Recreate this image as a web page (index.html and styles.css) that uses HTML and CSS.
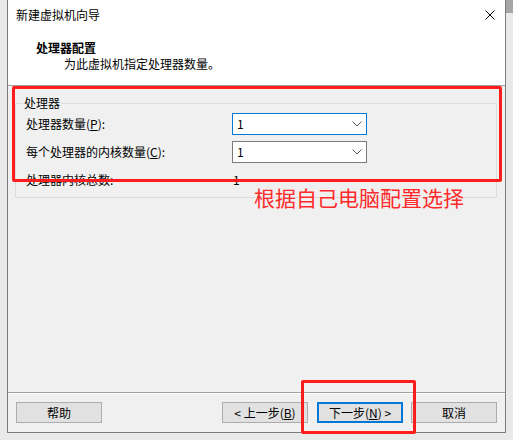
FILE: index.html
```html
<!DOCTYPE html>
<html lang="zh-CN">
<head>
<meta charset="utf-8">
<title>新建虚拟机向导</title>
<link rel="stylesheet" href="styles.css">
</head>
<body>
<div class="window">
  <div class="titlebar">
    <span class="title">新建虚拟机向导</span>
    <svg class="close" width="10" height="10" viewBox="0 0 10 10"><path d="M0.5 0.5L9.5 9.5M9.5 0.5L0.5 9.5" stroke="#000" stroke-width="1" fill="none"/></svg>
  </div>
  <div class="header">
    <div class="h-title">处理器配置</div>
    <div class="h-sub">为此虚拟机指定处理器数量。</div>
  </div>
  <div class="content">
    <fieldset class="group">
      <legend>处理器</legend>
      <div class="grid">
        <span class="label">处理器数量(<u>P</u>):</span>
        <div class="select focused"><span>1</span><svg width="10" height="6" viewBox="0 0 10 6"><path d="M0.5 0.5L5 5L9.5 0.5" stroke="#555" stroke-width="1" fill="none"/></svg></div>
        <span class="label">每个处理器的内核数量(<u>C</u>):</span>
        <div class="select"><span>1</span><svg width="10" height="6" viewBox="0 0 10 6"><path d="M0.5 0.5L5 5L9.5 0.5" stroke="#555" stroke-width="1" fill="none"/></svg></div>
        <span class="label">处理器内核总数:</span>
        <span class="value">1</span>
      </div>
    </fieldset>
  </div>
  <div class="footer">
    <button class="btn">帮助</button>
    <span class="spacer"></span>
    <button class="btn">&lt; 上一步(<u>B</u>)</button>
    <button class="btn primary">下一步(<u>N</u>) &gt;</button>
    <button class="btn cancel">取消</button>
  </div>
  <div class="anno-box anno-group"></div>
  <div class="anno-box anno-next"></div>
  <div class="anno-text">根据自己电脑配置选择</div>
</div>
</body>
</html>
```
FILE: styles.css
```css
html, body {
  margin: 0;
  padding: 0;
}
body {
  width: 513px;
  height: 440px;
  overflow: hidden;
  background: linear-gradient(#a6a6a6, #a6a6a6) no-repeat right top / 7px 13px, #e9e9e9;
  font-family: "Noto Sans CJK SC", "Noto Sans", sans-serif;
  font-size: 12px;
  color: #000;
}
.window {
  position: relative;
  margin-left: 7px;
  width: 499px;
  height: 433px;
  box-sizing: border-box;
  border: 1px solid #7c7c7c;
  border-top: none;
  display: flex;
  flex-direction: column;
  background: #f0f0f0;
}
.titlebar {
  height: 30px;
  flex: none;
  background: #fff;
  display: flex;
  align-items: center;
  justify-content: space-between;
  padding: 0 10px 0 8px;
  line-height: 16px;
}
.close {
  display: block;
}
.header {
  height: 56px;
  flex: none;
  box-sizing: border-box;
  background: #fff;
  border-bottom: 1px solid #a0a0a0;
  padding: 10px 0 0 28px;
  line-height: 16px;
}
.h-title {
  font-weight: bold;
}
.h-sub {
  padding-left: 28px;
}
.content {
  flex: 1;
  padding-top: 9px;
}
.group {
  margin: 0 8px 0 7px;
  border: 1px solid #dcdcdc;
  padding: 0 10px 6px 10px;
  min-width: 0;
}
.group legend {
  padding: 0 1px;
  margin-left: -3px;
  line-height: 16px;
}
.grid {
  margin-top: 2px;
  display: grid;
  grid-template-columns: 206px 135px;
  grid-auto-rows: 22px;
  row-gap: 6px;
  align-items: center;
  line-height: 16px;
}
.select {
  height: 22px;
  box-sizing: border-box;
  border: 1px solid #7a7a7a;
  background: #fff;
  display: flex;
  align-items: center;
  justify-content: space-between;
  padding: 0 4px 0 4px;
}
.select.focused {
  border-color: #0078d7;
}
.select svg {
  display: block;
}
.value {
  padding-left: 1px;
}
.footer {
  height: 40px;
  flex: none;
  box-sizing: border-box;
  border-top: 1px solid #a0a0a0;
  box-shadow: inset 0 1px 0 #fff;
  display: flex;
  align-items: flex-start;
  padding: 9px 8px 0 8px;
}
.spacer {
  flex: 1;
}
.btn {
  width: 86px;
  height: 21px;
  box-sizing: border-box;
  border: 1px solid #adadad;
  background: #e1e1e1;
  font-family: "Noto Sans CJK SC", "Noto Sans", sans-serif;
  font-size: 12px;
  line-height: 16px;
  color: #000;
  padding: 0;
  margin: 0;
}
.btn.primary {
  border: 2px solid #0078d7;
  margin-left: 9px;
}
.btn.cancel {
  margin-left: 8px;
}
.anno-box {
  position: absolute;
  box-sizing: border-box;
  border: 3px solid #ff1c1c;
  border-radius: 2px;
}
.anno-group {
  left: 4px;
  top: 86px;
  width: 490px;
  height: 96px;
}
.anno-next {
  left: 293px;
  top: 380px;
  width: 115px;
  height: 54px;
}
.anno-text {
  position: absolute;
  left: 246px;
  top: 186px;
  font-size: 21px;
  line-height: 22px;
  color: #ff2a2a;
  white-space: nowrap;
}
```
